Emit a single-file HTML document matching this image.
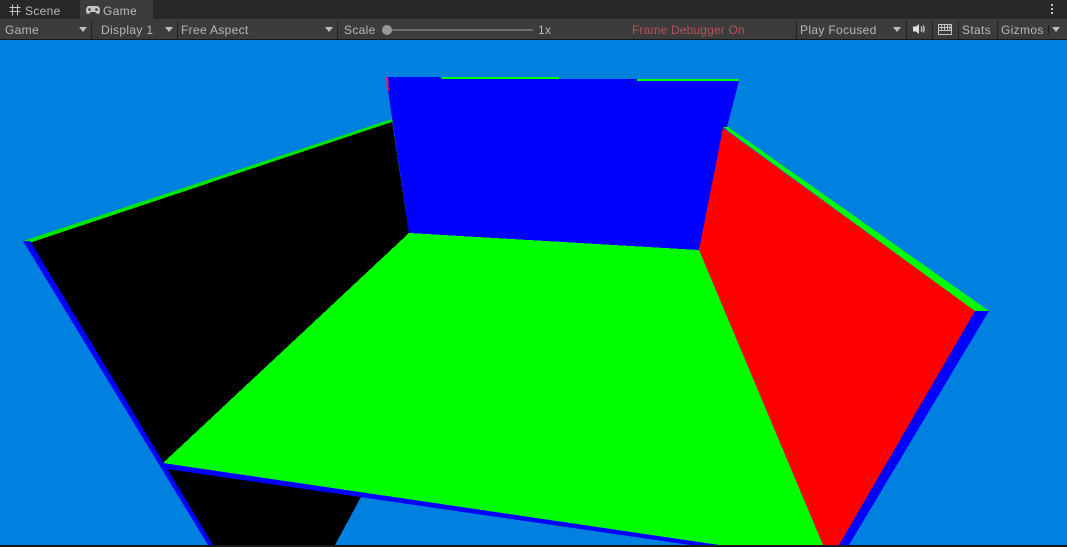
<!DOCTYPE html>
<html>
<head>
<meta charset="utf-8">
<style>
html,body{margin:0;padding:0;background:#191919;}
#r{position:relative;width:1067px;height:547px;overflow:hidden;background:#191919;font-family:"Liberation Sans",sans-serif;font-size:12px;color:#b8b8b8;}
.a{position:absolute;}
.t{position:absolute;white-space:nowrap;line-height:14px;letter-spacing:.33px;}
.s{position:absolute;top:20px;width:1px;height:19px;background:#232323;}
.d{position:absolute;width:0;height:0;border-left:4.5px solid transparent;border-right:4.5px solid transparent;border-top:5px solid #bdbdbd;}
</style>
</head>
<body>
<div id="r">
<div class="a" style="left:0;top:0;width:1067px;height:19px;background:#282828;"></div>
<div class="a" style="left:80px;top:0;width:73px;height:19px;background:#3c3c3c;border-radius:2px 2px 0 0;"></div>
<svg class="a" style="left:9px;top:4px;" width="12" height="12" viewBox="0 0 12 12"><path d="M3.500 .5V11.500M8.500 .5V11.500M.5 3.500H11.500M.5 7.500H11.500" stroke="#c8c8c8" stroke-width="1" fill="none"/></svg>
<div class="t" style="left:25px;top:4px;">Scene</div>
<svg class="a" style="left:85px;top:5px;" width="16" height="10" viewBox="0 0 16 10"><path d="M4 1H12C14 1 15 3 15 5.500C15 8 14 9 13 9C11.500 9 11 7 10 7H6C5 7 4.500 9 3 9C2 9 1 8 1 5.500C1 3 2 1 4 1Z" fill="#c4c4c4"/><circle cx="4.500" cy="4.500" r="1.300" fill="#3c3c3c"/><circle cx="11.500" cy="4.500" r="1.300" fill="#3c3c3c"/></svg>
<div class="t" style="left:103px;top:4px;">Game</div>
<div class="a" style="left:1051px;top:4px;width:2px;height:2px;background:#c4c4c4;box-shadow:0 4px 0 #c4c4c4,0 8px 0 #c4c4c4;"></div>

<div class="a" style="left:0;top:19px;width:1067px;height:20px;background:#3c3c3c;"></div>
<div class="a" style="left:0;top:39px;width:1067px;height:1px;background:#191919;"></div>

<div class="t" style="left:5px;top:23px;">Game</div>
<div class="d" style="left:79px;top:27px;"></div>
<div class="s" style="left:91px;"></div>
<div class="t" style="left:101px;top:23px;">Display 1</div>
<div class="d" style="left:165px;top:27px;"></div>
<div class="s" style="left:177px;"></div>
<div class="t" style="left:181px;top:23px;">Free Aspect</div>
<div class="d" style="left:325px;top:27px;"></div>
<div class="s" style="left:337px;"></div>
<div class="t" style="left:344px;top:23px;">Scale</div>
<div class="a" style="left:387px;top:29px;width:146px;height:2px;background:#6e6e6e;"></div>
<div class="a" style="left:382px;top:25px;width:10px;height:10px;border-radius:5px;background:#999;"></div>
<div class="t" style="left:538px;top:23px;">1x</div>
<div class="t" style="left:632px;top:23px;color:#b4525a;letter-spacing:.16px;">Frame Debugger On</div>
<div class="s" style="left:796px;"></div>
<div class="t" style="left:800px;top:23px;">Play Focused</div>
<div class="d" style="left:893px;top:27px;"></div>
<div class="s" style="left:906px;"></div>
<svg class="a" style="left:912px;top:23px;" width="14" height="12" viewBox="0 0 14 12"><path d="M1 3.500H4L7 1V11L4 8.500H1Z" fill="#e0e0e0"/><path d="M9 3.500C10 5 10 7 9 8.500M11 2.500C12.500 4.500 12.500 7.500 11 9.500" stroke="#c4c4c4" stroke-width="1.400" fill="none"/></svg>
<div class="s" style="left:932px;"></div>
<svg class="a" style="left:938px;top:24px;" width="14" height="11" viewBox="0 0 14 11"><path d="M.5 .5H13.500V10.500H.5ZM.5 3.500H13.500M.5 6.500H13.500M3.500 .5V6.500M6.500 .5V6.500M9.500 .5V6.500M12 .5V6.500" stroke="#c4c4c4" stroke-width="1" fill="none"/></svg>
<div class="s" style="left:958px;"></div>
<div class="t" style="left:962px;top:23px;">Stats</div>
<div class="s" style="left:997px;"></div>
<div class="t" style="left:1001px;top:23px;">Gizmos</div>
<div class="a" style="left:1048px;top:25px;width:1px;height:10px;background:#232323;"></div>
<div class="d" style="left:1052px;top:27px;"></div>

<svg class="a" style="left:0;top:40px;" width="1067" height="505" viewBox="0 40 1067 505" shape-rendering="crispEdges">
<rect x="0" y="40" width="1067" height="505" fill="#0080df"/>
<!-- lower black floor side -->
<polygon points="160,463 373,494 335,545 213,545" fill="#000"/>
<polygon points="361,497 373,494 373,545 335,545" fill="#0080df"/>
<!-- back wall -->
<polygon points="386,77 440,77 441,79 637,79 739,81 727,127 699,250 409,233" fill="#0000ff"/>
<polygon points="442,77 559,77 559,79 442,79" fill="#00ff00"/>
<polygon points="637,79 739,79 739,81 637,81" fill="#00ff00"/>
<polygon points="386,77 388,77 389,91 387,91" fill="#e0205a"/>
<!-- black wall -->
<polygon points="28,243 392,121 409,233 163,463" fill="#000"/>
<polygon points="23,241 392,119 393,121.500 28,243.500" fill="#00e800"/>
<!-- left blue band -->
<polygon points="23,241 30,241 213,545 208,545" fill="#0000ff"/>
<!-- red wall -->
<polygon points="723,128 975,311 839,545 823,545 699,250" fill="#ff0000"/>
<polygon points="723,127 728,127 989,311 975,311" fill="#00ff00"/>
<!-- right blue band -->
<polygon points="975,311 989,311 849,545 839,545" fill="#0000ff"/>
<!-- floor -->
<polygon points="409,233 699,250 823,545 720,545 163,463" fill="#00ff00"/>
<polygon points="163,463 719,545 690,545 167,469" fill="#0000ff"/>
</svg>
</div>
</body>
</html>
